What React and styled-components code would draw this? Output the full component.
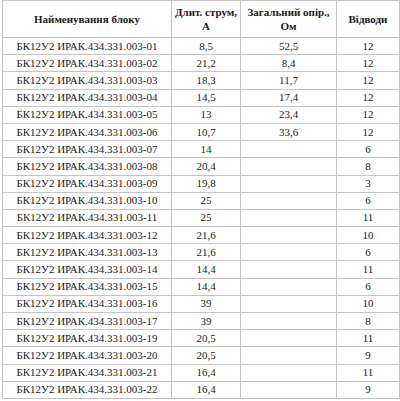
import React from "react";
import styled, { createGlobalStyle } from "styled-components";

const Global = createGlobalStyle`
  html, body { margin: 0; padding: 0; background: #ffffff; }
  body { font-family: "Liberation Serif", "DejaVu Serif", serif; color: #1a1a1a; }
`;

const Page = styled.div`
  padding: 0 0 0 2px;
`;

const Table = styled.table`
  border-collapse: collapse;
  table-layout: fixed;
  width: 397px;
  font-family: "Liberation Serif", "DejaVu Serif", serif;
  font-size: 11px;
`;

const HeadCell = styled.th`
  border: 1px solid #c4c4c4;
  height: 36px;
  padding: 0 2px;
  font-family: "Liberation Serif", "DejaVu Serif", serif;
  font-weight: bold;
  line-height: 14px;
  text-align: center;
  vertical-align: middle;
  color: #1a1a1a;
`;

const Row = styled.tr`
  height: 17.2px;
`;

const Cell = styled.td`
  border: 1px solid #c4c4c4;
  padding: 0;
  font-family: "Liberation Serif", "DejaVu Serif", serif;
  text-align: center;
  vertical-align: middle;
  line-height: 13px;
  white-space: nowrap;
  color: #222;
`;

const rows = [
  ["01", "8,5", "52,5", "12"],
  ["02", "21,2", "8,4", "12"],
  ["03", "18,3", "11,7", "12"],
  ["04", "14,5", "17,4", "12"],
  ["05", "13", "23,4", "12"],
  ["06", "10,7", "33,6", "12"],
  ["07", "14", "", "6"],
  ["08", "20,4", "", "8"],
  ["09", "19,8", "", "3"],
  ["10", "25", "", "6"],
  ["11", "25", "", "11"],
  ["12", "21,6", "", "10"],
  ["13", "21,6", "", "6"],
  ["14", "14,4", "", "11"],
  ["15", "14,4", "", "6"],
  ["16", "39", "", "10"],
  ["17", "39", "", "8"],
  ["19", "20,5", "", "11"],
  ["20", "20,5", "", "9"],
  ["21", "16,4", "", "11"],
  ["22", "16,4", "", "9"],
];

export default function App() {
  return (
    <Page>
      <Global />
      <Table>
        <colgroup>
          <col style={{ width: 169 }} />
          <col style={{ width: 69 }} />
          <col style={{ width: 96 }} />
          <col style={{ width: 63 }} />
        </colgroup>
        <thead>
          <tr>
            <HeadCell>Найменування блоку</HeadCell>
            <HeadCell>Длит. струм, А</HeadCell>
            <HeadCell>Загальний опір., Ом</HeadCell>
            <HeadCell>Відводи</HeadCell>
          </tr>
        </thead>
        <tbody>
          {rows.map(([n, a, r, v]) => (
            <Row key={n}>
              <Cell>БК12У2 ИРАК.434.331.003-{n}</Cell>
              <Cell>{a}</Cell>
              <Cell>{r}</Cell>
              <Cell>{v}</Cell>
            </Row>
          ))}
        </tbody>
      </Table>
    </Page>
  );
}
